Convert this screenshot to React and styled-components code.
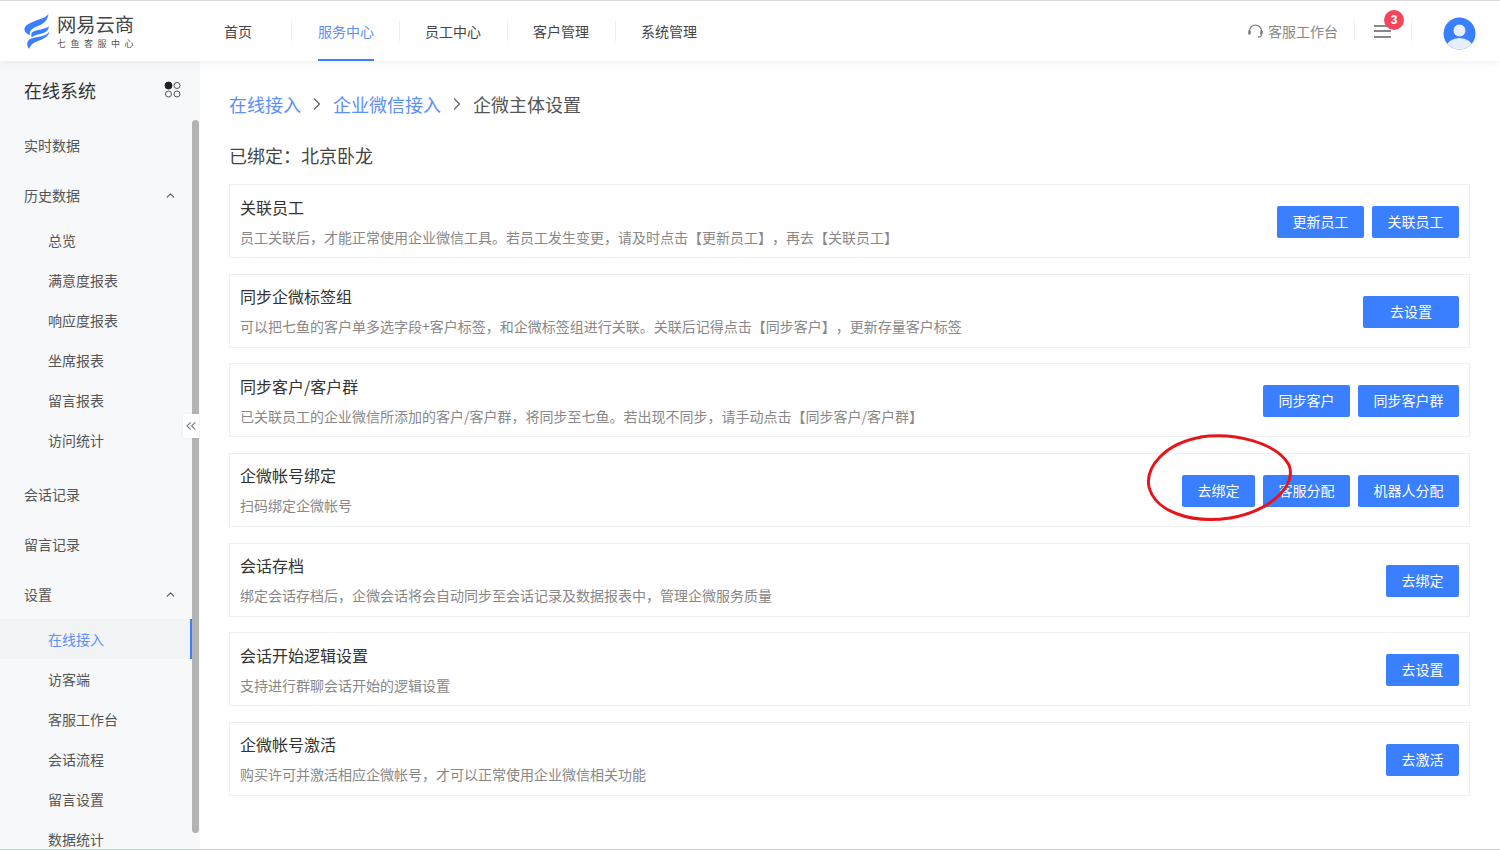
import styled, { createGlobalStyle } from "styled-components";
import { ChevronUp, ChevronRight, ChevronsLeft } from "lucide-react";

const GlobalStyle = createGlobalStyle`
  html, body {
    margin: 0;
    padding: 0;
    height: 100%;
    overflow: hidden;
    background: #fff;
  }
  body {
    font-family: "Noto Sans CJK SC", "Noto Sans", sans-serif;
    color: #333;
    text-spacing-trim: space-all;
  }
  * {
    box-sizing: border-box;
  }
`;

const Page = styled.div`
  position: relative;
  width: 1500px;
  height: 850px;
  overflow: hidden;
  display: flex;
  flex-direction: column;
  border-top: 1px solid #dcdcdc;
  border-bottom: 1px solid #c4cccc;
`;

const Header = styled.header`
  position: relative;
  z-index: 2;
  flex: none;
  height: 60px;
  display: flex;
  align-items: center;
  background: #fff;
  box-shadow: 0 2px 8px rgba(0, 0, 0, 0.06);
`;

const LogoWrap = styled.div`
  width: 198px;
  padding-left: 24px;
  display: flex;
  align-items: center;
  gap: 7px;
`;

const LogoText = styled.div`
  display: flex;
  flex-direction: column;
  gap: 2px;
`;

const LogoName = styled.span`
  font-size: 19.3px;
  line-height: 24px;
  color: #444;
  white-space: nowrap;
`;

const LogoSub = styled.span`
  font-size: 9px;
  line-height: 12px;
  letter-spacing: 4.5px;
  color: #555;
  white-space: nowrap;
`;

const Nav = styled.nav`
  display: flex;
  align-items: center;
  height: 100%;
`;

const NavItem = styled.div`
  display: flex;
  align-items: center;
  height: 100%;
  padding: 0 26px;
  position: relative;
  font-size: 14px;
  color: ${(props) => (props.$active ? "#5b8ff9" : "#444")};

  &:not(:first-child)::before {
    content: "";
    position: absolute;
    left: 0;
    top: 20px;
    height: 20px;
    width: 1px;
    background: #eee;
  }
`;

const NavLabel = styled.span`
  height: 100%;
  display: flex;
  align-items: center;
  border-bottom: 2px solid ${(props) => (props.$active ? "#3a7fff" : "transparent")};
  padding-top: 2px;
`;

const FirstNav = styled(NavItem)`
  padding-right: 39px;
`;

const ActiveNav = styled(NavItem)`
  padding-left: 27px;
  padding-right: 25px;
`;

const HeaderRight = styled.div`
  margin-left: auto;
  display: flex;
  align-items: center;
  height: 100%;
  padding-right: 24px;
`;

const Service = styled.div`
  display: flex;
  align-items: center;
  gap: 5px;
  font-size: 14px;
  color: #888;
  padding-right: 16px;
  border-right: 1px solid #eee;
  height: 20px;
`;

const MenuBox = styled.div`
  position: relative;
  width: 57px;
  height: 20px;
  display: flex;
  align-items: center;
  padding-left: 19px;
  border-right: 1px solid #eee;
`;

const Burger = styled.div`
  width: 17px;
  height: 13px;
  border-top: 2px solid #888;
  border-bottom: 2px solid #888;
  position: relative;

  &::after {
    content: "";
    position: absolute;
    left: 0;
    right: 0;
    top: 3.5px;
    height: 2px;
    background: #888;
  }
`;

const Badge = styled.span`
  position: absolute;
  left: 29px;
  top: -11px;
  width: 20px;
  height: 20px;
  border-radius: 50%;
  background: #f5455c;
  color: #fff;
  font-family: "Liberation Sans", sans-serif;
  font-size: 12px;
  font-weight: 700;
  display: flex;
  align-items: center;
  justify-content: center;
`;

const Avatar = styled.div`
  margin-left: 31px;
  margin-top: 4px;
  width: 33px;
  height: 33px;
`;

const Body = styled.div`
  flex: 1;
  display: flex;
  min-height: 0;
`;

const Sidebar = styled.aside`
  position: relative;
  width: 200px;
  flex: none;
  background: #f7f8fa;
  overflow: hidden;
`;

const SideHead = styled.div`
  height: 59px;
  padding: 0 18px 1px 24px;
  display: flex;
  align-items: center;
  justify-content: space-between;
  font-size: 18px;
  color: #333;
`;

const MenuRow = styled.div`
  height: 50px;
  width: 192px;
  padding: 0 15px 0 24px;
  display: flex;
  align-items: center;
  justify-content: space-between;
  font-size: 14px;
  color: #555;
`;

const SubList = styled.div`
  margin-bottom: ${(props) => (props.$last ? "0" : "9px")};
`;

const SubRow = styled.div`
  height: 40px;
  width: 192px;
  padding-left: 48px;
  display: flex;
  align-items: center;
  font-size: 14px;
  color: ${(props) => (props.$active ? "#5b8ff9" : "#555")};
  background: ${(props) => (props.$active ? "#f2f3f5" : "transparent")};
  border-right: 2px solid ${(props) => (props.$active ? "#3a7fff" : "transparent")};
`;

const Scrollbar = styled.div`
  position: absolute;
  right: 1px;
  top: 59px;
  bottom: 16px;
  width: 7px;
  border-radius: 4px;
  background: #b3b3b3;
`;

const CollapseTab = styled.div`
  position: absolute;
  right: 1px;
  top: 353px;
  width: 16px;
  height: 24px;
  background: #fff;
  border-radius: 3px 0 0 3px;
  box-shadow: 0 0 3px rgba(0, 0, 0, 0.06);
  color: #777c86;
  display: flex;
  align-items: center;
  justify-content: center;
`;

const Main = styled.main`
  flex: 1;
  padding: 27px 30px 0 29px;
  min-width: 0;
`;

const Crumbs = styled.div`
  display: flex;
  align-items: center;
  height: 32px;
  font-size: 18px;
  color: #555;
`;

const CrumbLink = styled.span`
  color: #5b8ff9;
`;

const CrumbSep = styled.span`
  display: flex;
  width: 32px;
  justify-content: center;
  color: #666;
`;

const BoundName = styled.div`
  margin-top: 19px;
  height: 32px;
  display: flex;
  align-items: center;
  font-size: 18px;
  color: #444;
`;

const CardList = styled.div`
  margin-top: 13.2px;
  display: flex;
  flex-direction: column;
  gap: 15.6px;
`;

const Card = styled.section`
  height: 74px;
  border: 1px solid #eff0f2;
  padding: 0 10px;
  display: flex;
  align-items: center;
  justify-content: space-between;
`;

const CardInfo = styled.div`
  display: flex;
  flex-direction: column;
  gap: 8px;
`;

const CardTitle = styled.div`
  font-size: 16px;
  line-height: 23px;
  color: #333;
`;

const CardDesc = styled.div`
  font-size: 14px;
  line-height: 20px;
  color: #888;
`;

const Actions = styled.div`
  display: flex;
  gap: 8px;
  margin-top: 2px;
`;

const Button = styled.button`
  height: 32px;
  min-width: 73px;
  width: ${(props) => (props.$wide ? "96px" : "auto")};
  padding: 0 15.5px 2px;
  border: none;
  border-radius: 2px;
  background: #3a7fff;
  color: #fff;
  font-family: inherit;
  font-size: 14px;
`;

const Circle = styled.svg`
  position: absolute;
  left: 1140px;
  top: 428px;
  pointer-events: none;
  z-index: 3;
`;

const LogoMark = () => (
  <svg width="26" height="36" viewBox="0 0 26 36" fill="#3a7fff">
    <path d="M24.500 0.500 C23 4 18 5.500 11 8 C4 10.500 0 13 0.500 17 C1 19.500 3 21 6 22 C5 17 9 15 14 13 C20 10.500 24 7 24.500 0.500 Z" />
    <path d="M25 13.500 C20 16.500 14 16.500 9.500 18.500 C7 19.500 6.500 22 8 24.500 C10 21.500 16 21.500 20.500 19.500 C23 18.500 24.500 16.500 25 13.500 Z" />
    <path d="M25.500 18.500 C24.500 24 19 26 14 28 C9.500 29.500 6.500 32 5 36 C2.500 32 2 27.500 7.500 25.500 C14 23.500 21.500 24 25.500 18.500 Z" />
  </svg>
);

const HeadsetIcon = () => (
  <svg width="15" height="15" viewBox="0 0 15 15" fill="none" stroke="#777">
    <path d="M1.500 9 V7 A6 6 0 0 1 13.500 7 V9" strokeWidth="1.200" />
    <rect x="0.500" y="6.500" width="2" height="4" rx="1" fill="#777" strokeWidth="0.500" />
    <rect x="12.500" y="6.500" width="2" height="4" rx="1" fill="#777" strokeWidth="0.500" />
    <path d="M13.500 10.500 C13.500 12 12 13 10 13" strokeWidth="1.200" />
  </svg>
);

const DotsIcon = () => (
  <svg width="18" height="18" viewBox="0 0 18 18" fill="none" stroke="#555" strokeWidth="1">
    <circle cx="4.500" cy="4.500" r="3.500" fill="#222" stroke="#222" />
    <circle cx="13" cy="4.500" r="3" />
    <circle cx="4.500" cy="13" r="3" />
    <circle cx="13" cy="13" r="3" />
  </svg>
);

const AvatarIcon = () => (
  <svg width="33" height="33" viewBox="0 0 33 33">
    <defs>
      <clipPath id="avatarClip">
        <circle cx="16.500" cy="16.500" r="16" />
      </clipPath>
    </defs>
    <circle cx="16.500" cy="16.500" r="16" fill="#3a7fff" />
    <g clipPath="url(#avatarClip)">
      <ellipse cx="16.500" cy="30" rx="13" ry="9" fill="#e6efff" />
      <circle cx="16.500" cy="13.500" r="6.500" fill="#e6efff" stroke="#3a7fff" strokeWidth="1" />
    </g>
  </svg>
);

const history = ["总览", "满意度报表", "响应度报表", "坐席报表", "留言报表", "访问统计"];
const settings = ["在线接入", "访客端", "客服工作台", "会话流程", "留言设置", "数据统计"];

const cards = [
  {
    title: "关联员工",
    desc: "员工关联后，才能正常使用企业微信工具。若员工发生变更，请及时点击【更新员工】，再去【关联员工】",
    actions: ["更新员工", "关联员工"],
  },
  {
    title: "同步企微标签组",
    desc: "可以把七鱼的客户单多选字段+客户标签，和企微标签组进行关联。关联后记得点击【同步客户】，更新存量客户标签",
    actions: ["去设置"],
    wide: true,
  },
  {
    title: "同步客户/客户群",
    desc: "已关联员工的企业微信所添加的客户/客户群，将同步至七鱼。若出现不同步，请手动点击【同步客户/客户群】",
    actions: ["同步客户", "同步客户群"],
  },
  {
    title: "企微帐号绑定",
    desc: "扫码绑定企微帐号",
    actions: ["去绑定", "客服分配", "机器人分配"],
  },
  {
    title: "会话存档",
    desc: "绑定会话存档后，企微会话将会自动同步至会话记录及数据报表中，管理企微服务质量",
    actions: ["去绑定"],
  },
  {
    title: "会话开始逻辑设置",
    desc: "支持进行群聊会话开始的逻辑设置",
    actions: ["去设置"],
  },
  {
    title: "企微帐号激活",
    desc: "购买许可并激活相应企微帐号，才可以正常使用企业微信相关功能",
    actions: ["去激活"],
  },
];

const App = () => {
  return (
    <Page>
      <GlobalStyle />
      <Header>
        <LogoWrap>
          <LogoMark />
          <LogoText>
            <LogoName>网易云商</LogoName>
            <LogoSub>七鱼客服中心</LogoSub>
          </LogoText>
        </LogoWrap>
        <Nav>
          <FirstNav>首页</FirstNav>
          <ActiveNav $active>
            <NavLabel $active>服务中心</NavLabel>
          </ActiveNav>
          <NavItem>员工中心</NavItem>
          <NavItem>客户管理</NavItem>
          <NavItem>系统管理</NavItem>
        </Nav>
        <HeaderRight>
          <Service>
            <HeadsetIcon />
            客服工作台
          </Service>
          <MenuBox>
            <Burger />
            <Badge>3</Badge>
          </MenuBox>
          <Avatar>
            <AvatarIcon />
          </Avatar>
        </HeaderRight>
      </Header>
      <Body>
        <Sidebar>
          <SideHead>
            在线系统
            <DotsIcon />
          </SideHead>
          <MenuRow>实时数据</MenuRow>
          <MenuRow>
            历史数据
            <ChevronUp size={13} strokeWidth={2} color="#555" />
          </MenuRow>
          <SubList>
            {history.map((name) => (
              <SubRow key={name}>{name}</SubRow>
            ))}
          </SubList>
          <MenuRow>会话记录</MenuRow>
          <MenuRow>留言记录</MenuRow>
          <MenuRow>
            设置
            <ChevronUp size={13} strokeWidth={2} color="#555" />
          </MenuRow>
          <SubList $last>
            {settings.map((name) => (
              <SubRow key={name} $active={name === "在线接入"}>
                {name}
              </SubRow>
            ))}
          </SubList>
          <Scrollbar />
          <CollapseTab>
            <ChevronsLeft size={18} strokeWidth={1.7} />
          </CollapseTab>
        </Sidebar>
        <Main>
          <Crumbs>
            <CrumbLink>在线接入</CrumbLink>
            <CrumbSep>
              <ChevronRight size={20} strokeWidth={1.5} />
            </CrumbSep>
            <CrumbLink>企业微信接入</CrumbLink>
            <CrumbSep>
              <ChevronRight size={20} strokeWidth={1.5} />
            </CrumbSep>
            企微主体设置
          </Crumbs>
          <BoundName>已绑定：北京卧龙</BoundName>
          <CardList>
            {cards.map((card) => (
              <Card key={card.title}>
                <CardInfo>
                  <CardTitle>{card.title}</CardTitle>
                  <CardDesc>{card.desc}</CardDesc>
                </CardInfo>
                <Actions>
                  {card.actions.map((label) => (
                    <Button key={label} $wide={card.wide}>
                      {label}
                    </Button>
                  ))}
                </Actions>
              </Card>
            ))}
          </CardList>
        </Main>
      </Body>
      <Circle width="160" height="100" viewBox="0 0 160 100" fill="none">
        <path
          d="M60 8 C95 3 137 14 149 36 C157 56 131 82 90 89 C50 95 15 82 9 58 C5 38 25 14 62 8"
          stroke="#e8141a"
          strokeWidth="3"
        />
      </Circle>
    </Page>
  );
};

export default App;
